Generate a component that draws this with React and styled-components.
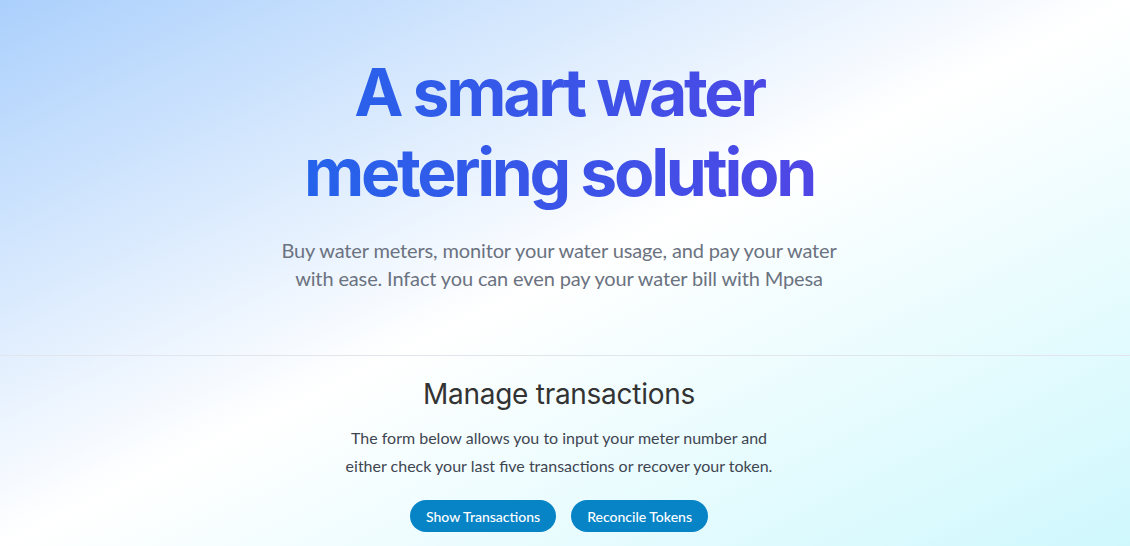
import React from "react";
import styled, { createGlobalStyle } from "styled-components";

const GlobalStyle = createGlobalStyle`
  html, body {
    margin: 0;
    padding: 0;
  }
  body {
    font-family: Lato, "Noto Sans", sans-serif;
    min-height: 546px;
    background: linear-gradient(to bottom right, #abd0fc 0%, #ffffff 50%, #cff8fd 100%);
  }
`;

const Page = styled.div`
  min-height: 546px;
  display: flex;
  flex-direction: column;
`;

const Hero = styled.section`
  display: flex;
  flex-direction: column;
  align-items: center;
  padding: 52px 12px 63px 0;
  text-align: center;
`;

const Title = styled.h1`
  margin: 0;
  font-family: Inter, "Noto Sans", sans-serif;
  font-size: 66px;
  line-height: 80px;
  font-weight: 700;
  letter-spacing: -0.05em;
  background: linear-gradient(to right, #2563eb, #4f46e5);
  -webkit-background-clip: text;
  background-clip: text;
  color: transparent;
`;

const Lead = styled.p`
  margin: 24px 0 0;
  max-width: 580px;
  font-size: 20px;
  line-height: 28px;
  letter-spacing: -0.007em;
  color: #6b7280;
`;

const Divider = styled.hr`
  margin: 0;
  border: none;
  border-top: 1px solid #e2e6ec;
`;

const Manage = styled.section`
  display: flex;
  flex-direction: column;
  align-items: center;
  text-align: center;
  padding: 18px 12px 0 0;
`;

const SectionTitle = styled.h2`
  margin: 0;
  font-family: Inter, "Noto Sans", sans-serif;
  font-size: 28px;
  line-height: 40px;
  font-weight: 400;
  letter-spacing: -0.01em;
  color: #333333;
`;

const Text = styled.p`
  margin: 10px 0 0;
  max-width: 440px;
  font-size: 16px;
  line-height: 28px;
  color: #3f4652;
`;

const Actions = styled.div`
  display: flex;
  gap: 15px;
  margin-top: 20px;
`;

const Button = styled.button`
  height: 32px;
  padding: 0 16px;
  border: none;
  border-radius: 9999px;
  background: #0784c6;
  color: #ffffff;
  font-family: Lato, "Noto Sans", sans-serif;
  font-size: 14px;
  font-weight: 500;
  cursor: pointer;
`;

export default function App() {
  return (
    <Page>
      <GlobalStyle />
      <Hero>
        <Title>
          A smart water
          <br />
          metering solution
        </Title>
        <Lead>
          Buy water meters, monitor your water usage, and pay your water with
          ease. Infact you can even pay your water bill with Mpesa
        </Lead>
      </Hero>
      <Divider />
      <Manage>
        <SectionTitle>Manage transactions</SectionTitle>
        <Text>
          The form below allows you to input your meter number and either check
          your last five transactions or recover your token.
        </Text>
        <Actions>
          <Button type="button">Show Transactions</Button>
          <Button type="button">Reconcile Tokens</Button>
        </Actions>
      </Manage>
    </Page>
  );
}
